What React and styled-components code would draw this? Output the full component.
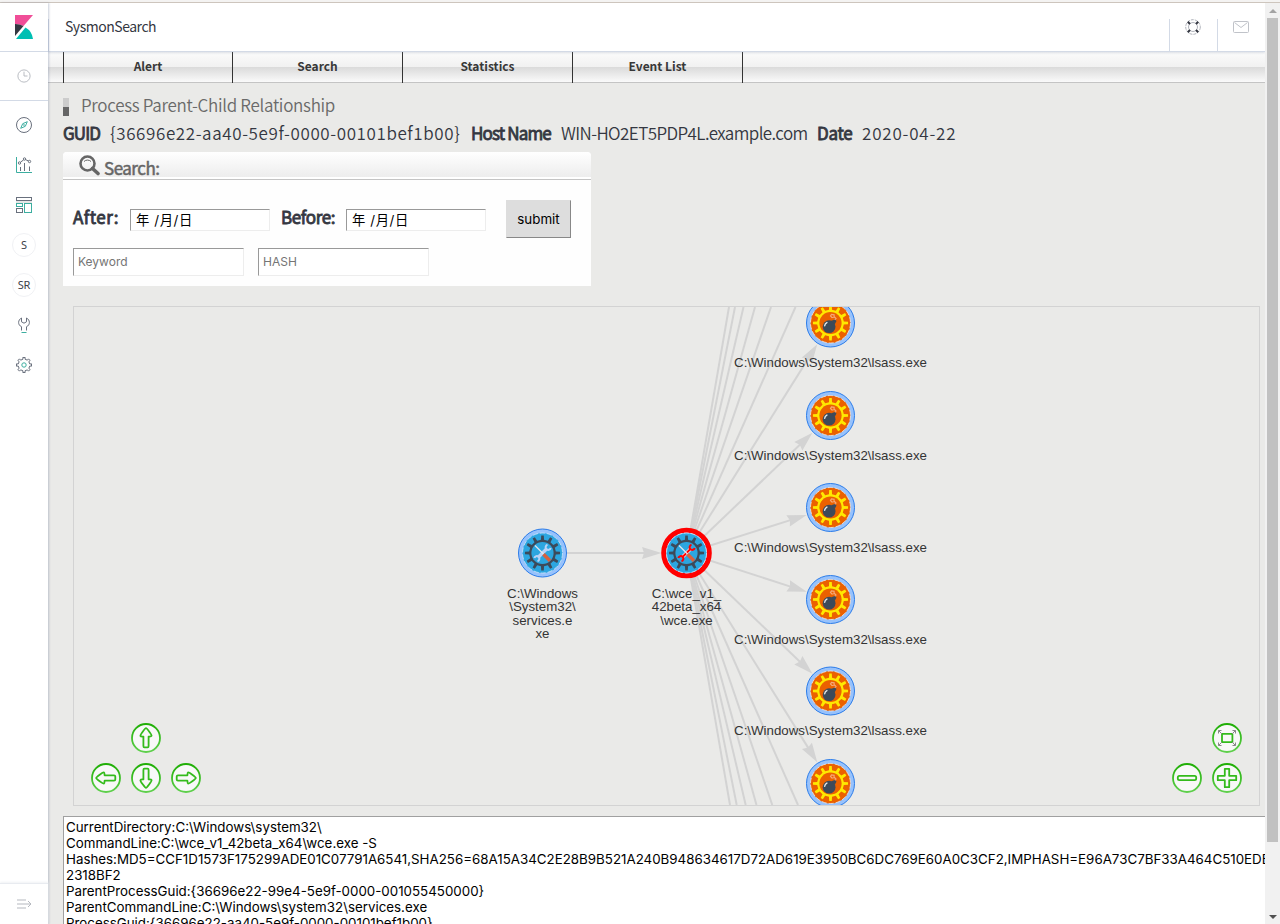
import React from "react";
import styled, { createGlobalStyle } from "styled-components";

const Global = createGlobalStyle`
  * { box-sizing: border-box; }
  html, body { margin: 0; height: 924px; overflow: hidden; background: #eaeae8; }
  body { font-family: "Noto Sans CJK JP", "Noto Sans", sans-serif; color: #343741; }
`;

const Page = styled.div`
  width: 1280px; height: 924px; display: flex; flex-direction: column; overflow: hidden;
`;
const TopEdge = styled.div`
  flex: none; height: 3px; background: #f4f3f2; border-bottom: 1px solid #cdc5bd;
`;
const Body = styled.div`
  flex: 1; min-height: 0; display: flex;
`;
const Sidebar = styled.aside`
  width: 48px; flex: none; background: #fff; display: flex; flex-direction: column;
  box-shadow: 1px 0 2px rgba(100, 115, 150, .35); z-index: 2;
`;
const LogoCell = styled.div`
  height: 49px; flex: none; border-bottom: 1px solid #d3dae6; padding: 12px 0 0 15px;
  svg { display: block; }
`;
const RecentCell = styled.div`
  height: 49px; flex: none; border-bottom: 1px solid #d3dae6; display: flex;
  align-items: center; justify-content: center; padding: 0 1px 1px 0;
`;
const SideList = styled.nav`
  flex: 1; padding-top: 4px; display: flex; flex-direction: column;
`;
const SideItem = styled.div`
  height: 40px; display: flex; align-items: center; justify-content: center;
`;
const Letter = styled.span`
  width: 24px; height: 24px; border: 1px solid #f0f1f4; border-radius: 50%;
  font: 11px/22px "Noto Sans", sans-serif; text-align: center; color: #3c3f4a;
  display: flex; justify-content: center; letter-spacing: -.2px;
`;
const Collapse = styled.div`
  height: 41px; flex: none; border-top: 1px solid #e8ebf0; display: flex;
  align-items: center; justify-content: center; box-shadow: 0 -1px 2px #f0f2f5;
`;
const Main = styled.main`
  flex: 1; min-width: 0; display: flex; flex-direction: column; background: #eaeae8; overflow: hidden;
`;
const Header = styled.header`
  height: 49px; flex: none; background: #fff; border-bottom: 1px solid #d3dae6;
  display: flex; align-items: flex-end; z-index: 1; box-shadow: 0 1px 2px rgba(120, 130, 160, .22);
`;
const AppName = styled.div`
  flex: 1; height: 32px; border-left: 1px solid #d3dae6; padding-left: 16px;
  font-size: 14px; line-height: 15px; letter-spacing: -.48px; white-space: nowrap;
`;
const HeaderCell = styled.div`
  width: 48px; height: 32px; border-left: 1px solid #d3dae6; display: flex; justify-content: center;
  padding-right: 2px;
`;
const Menu = styled.nav`
  height: 31px; flex: none; display: flex; padding-left: 15px; border-bottom: 1px solid #c4c4c4;
  background: linear-gradient(#fbfbfb 0, #f1f1f1 50%, #dadada 50%, #fafafa 100%);
`;
const MenuItem = styled.div`
  width: ${(p) => p.$w}px; height: 31px; border-left: 1px solid #333;
  border-right: ${(p) => (p.$last ? "1px solid #333" : "0")};
  text-align: center; font-size: 12px; font-weight: 700; line-height: 28px; color: #383838;
`;
const Content = styled.div`
  flex: 1; min-height: 0; padding-left: 15px; display: flex; flex-direction: column; overflow: hidden;
`;
const Title = styled.h1`
  margin: 11px 0 2px; height: 22px; flex: none; display: flex; align-items: center; gap: 12px;
  font-size: 17px; font-weight: 350; line-height: 22px; color: #6a6a6a;
  letter-spacing: -.3px;
`;
const Marker = styled.span`
  width: 6px; height: 18px; margin-top: 4px; background: linear-gradient(#ccc 50%, #666 50%);
`;
const Facts = styled.div`
  margin-top: 4px; height: 23px; flex: none; display: flex; font-size: 17px; line-height: 22px; white-space: nowrap;
`;
const Fact = styled.span`
  width: ${(p) => p.$w}px; flex: none; font-weight: ${(p) => (p.$bold ? 400 : 350)};
  -webkit-text-stroke: ${(p) => (p.$bold ? ".8px" : "0")};
  letter-spacing: ${(p) => p.$ls}px;
`;
const SearchPanel = styled.section`
  margin-top: 7px; width: 528px; height: 134px; flex: none; background: #fefefe;
  border-radius: 4px 4px 0 0;
`;
const SearchHead = styled.div`
  height: 28px; border-bottom: 1px solid #c4c4c4; border-radius: 4px 4px 0 0;
  background: linear-gradient(#fff, #ededed 92%, #fff 93%); padding-left: 16px;
  display: flex; gap: 4px; font-size: 17px; line-height: 31px; color: #666;
  letter-spacing: -.5px; -webkit-text-stroke: .5px;
  svg { margin-top: 3px; }
`;
const FormRow = styled.div`
  display: flex; align-items: ${(p) => (p.$text ? "flex-start" : "center")};
  padding: ${(p) => (p.$text ? "10px 0 0 10px" : "20px 0 0 10px")};
`;
const Label = styled.label`
  width: ${(p) => p.$w}px; font-size: 17px; line-height: 22px; margin-top: -5px;
  letter-spacing: ${(p) => p.$ls}px; -webkit-text-stroke: .8px;
`;
const field = `
  background: #fff; border: 1px solid #ededed; border-top-color: #999; border-left-color: #999;
`;
const DateField = styled.div`
  ${field}
  width: 140px; height: 22px; margin-right: ${(p) => p.$mr}px; margin-top: 1px; padding-left: 5px;
  font: 13.33px/20px "Inter", "Noto Sans CJK JP", sans-serif; color: #000; white-space: pre;
  letter-spacing: .6px;
`;
const Submit = styled.button`
  width: 65px; height: 38px; padding: 0; background: #ddd; border: 1px solid #ddd;
  border-right-color: #888; border-bottom-color: #888; color: #000;
  font: 13.33px "Inter", sans-serif;
`;
const TextField = styled.div`
  ${field}
  width: 171px; height: 28px; margin-right: 14px; padding-left: 4px;
  font: 12px/26px "Inter", sans-serif; color: #757575;
`;
const Graph = styled.section`
  margin: 20px 0 0 10px; width: 1187px; height: 500px; flex: none; border: 1px solid #d3d3d3;
  svg { display: block; }
`;
const Details = styled.pre`
  margin: 10px 0 0; width: 1240px; height: 140px; flex: none; background: #fff;
  border: 1px solid #a0a0a0; padding: 2px; color: #000; overflow: hidden;
  font: 13.33px/16px "Inter", sans-serif;
`;
const Scrollbar = styled.div`
  width: 15px; flex: none; background: #f1f1f1; display: flex; flex-direction: column; align-items: center;
  padding: 6px 0 5px;
`;
const Thumb = styled.div`
  width: 11px; height: 824px; margin: 5px 0 auto; background: #c1c1c1;
`;
const Arrow = styled.i`
  width: 0; height: 0; border: 4px solid transparent;
  ${(p) => p.$up ? "border-top: 0; border-bottom-color: #a3a3a3;" : "border-bottom: 0; border-top-color: #505050;"}
`;

const Icon = ({ s = 16, children, c = "#69707d" }) => (
  <svg width={s} height={s} viewBox="0 0 16 16" fill="none" stroke={c} strokeWidth="1">{children}</svg>
);

const gearPath = (outer, inner, teeth, top, base) => {
  const step = (Math.PI * 2) / teeth;
  let d = "";
  for (let i = 0; i < teeth; i++) {
    const a = i * step - Math.PI / 2;
    [[inner, -base], [outer, -top], [outer, top], [inner, base]].forEach(([r, k]) => {
      const t = a + k * step;
      d += `${d ? "L" : "M"}${(r * Math.cos(t)).toFixed(2)} ${(r * Math.sin(t)).toFixed(2)}`;
    });
  }
  return d + "Z";
};

const GEAR = gearPath(17.6, 13.4, 12, 0.14, 0.22);

const Bomb = ({ x, y }) => (
  <g transform={`translate(${x} ${y})`}>
    <circle r="24" fill="#97c2fc" stroke="#2b7ce9" />
    <circle r="20" fill="#eb6100" stroke="#f3e9df" strokeWidth=".8" strokeDasharray="5 2" />
    <path d={GEAR} fill="#ffe800" />
    <circle r="11.1" fill="#eb6100" />
    <path d="M3.800-2.500 5.500-4.500 4-6 1.500-5.500 0-7 1-8.600 3.600-8.200 3.600-6" fill="none" stroke="#f5a878" strokeWidth="1.200" />
    <circle cx="-1.4" cy="3.7" r="6.4" fill="#3d4a5a" />
    <path d="m.8-2.200 3.600-1.200 1.600 1.400-1.800 3.500Z" fill="#3d4a5a" />
    <path d="M-5.800 2.800a4 4 0 0 1 2.200-3.200" stroke="#e8ebee" strokeWidth="1.400" strokeLinecap="round" fill="none" />
  </g>
);

const Tool = ({ x, y, selected }) => {
  const wrench = selected ? "#f00" : "#b9d3f7";
  return (
    <g transform={`translate(${x} ${y})`}>
      <circle r={selected ? 22.8 : 24} fill={selected ? "#d2e5ff" : "#97c2fc"} stroke={selected ? "#f00" : "#2b7ce9"} strokeWidth={selected ? 5 : 1} />
      <circle r="20" fill="#2ca6e0" stroke="#cfe6f8" strokeWidth=".8" strokeDasharray="5 2" />
      <path d={GEAR} fill="#3d4a5a" />
      <circle r="11.1" fill="#2ca6e0" />
      <path d="M-4.500 4.500 4.500-4.500" stroke={selected ? "#f6f0f0" : wrench} strokeWidth="3.400" />
      <path d="M-4.500 4.500 4.500-4.500" stroke={wrench} strokeWidth="2" />
      <path d="M8.200-5A2.600 2.600 0 1 1 5-8.200M-8.200 5A2.600 2.600 0 1 1-5 8.200" fill="none" stroke={wrench} strokeWidth="2" />
      <path d="M-7.500-7.500 1 1" stroke="#e3e8ee" strokeWidth="1.300" />
      <path d="m1 1.200 6.500 6.500" stroke="#d8613f" strokeWidth="3.600" />
    </g>
  );
};

const CX = 612.5, CY = 246;
const lsassY = [16, 108.5, 200.5, 292.5, 384, 476.5];
const fan = [[655, 0], [661, 0], [669.5, 0], [681, 0], [697, 0], [721.5, 0],
  [656, 498], [662.7, 498], [671.7, 498], [682.5, 498], [698.3, 498], [724, 498]];

const Edge = ({ x1, y1, x2, y2 }) => {
  const a = Math.atan2(y2 - y1, x2 - x1);
  const tx = x2 - 25 * Math.cos(a), ty = y2 - 25 * Math.sin(a);
  return (
    <g>
      <path d={`M${x1} ${y1}L${tx - 17 * Math.cos(a)} ${ty - 17 * Math.sin(a)}`} stroke="#d3d3d3" strokeWidth="2" />
      <path d="M0 0-19.5 5.9-17.5 0-19.5-5.9Z" fill="#d3d3d3" transform={`translate(${tx} ${ty}) rotate(${(a * 180) / Math.PI})`} />
    </g>
  );
};

const NodeText = ({ x, y, lines }) => (
  <g fontFamily="Liberation Sans, sans-serif" fontSize="13.3" fill="#343434" textAnchor="middle">
    {lines.map((t, i) => <text key={i} x={x} y={y + i * 13.4}>{t}</text>)}
  </g>
);

const arrowShape = "M0-9.8C1-9.800 5.900-3 5.600-2.200 5.200-1.200 3.400-1.600 2.600-1.400V8Q2.600 9.300 1.600 9.300H-1.600Q-2.600 9.300-2.600 8V-1.400C-3.400-1.600-5.200-1.200-5.600-2.200-5.900-3-1-9.800 0-9.800Z";
const Control = ({ x, y, rot = 0, kind }) => (
  <g transform={`translate(${x} ${y})`} fill="none" stroke="url(#green)" strokeWidth="1.8" strokeLinejoin="round">
    <circle r="14" fill="#f8f8f8" />
    {!kind && <path d={arrowShape} transform={`rotate(${rot})`} stroke="#34bb1c" />}
    {kind === "minus" && <rect x="-9.2" y="-2.2" width="18.4" height="4.4" rx="1.6" stroke="#34bb1c" />}
    {kind === "plus" && <path d="M-2.2-9.2H2.2V-2.2H9.2V2.2H2.2V9.2H-2.2V2.2H-9.2V-2.2H-2.2Z" stroke="#34bb1c" />}
    {kind === "fit" && (
      <>
        <rect x="-5" y="-4.2" width="10.4" height="8.4" stroke="#34bb1c" />
        <path d="m-5-4-3.500-3.500M5-4l3.500-3.500M-5 4l-3.500 3.500M5 4l3.500 3.500M-8.500-4.500v-3h3M8.500-4.500v-3h-3M-8.500 4.500v3h3M8.500 4.500v3h-3" stroke="#888" strokeWidth="1" />
      </>
    )}
  </g>
);

const details = `CurrentDirectory:C:\\Windows\\system32\\
CommandLine:C:\\wce_v1_42beta_x64\\wce.exe -S
Hashes:MD5=CCF1D1573F175299ADE01C07791A6541,SHA256=68A15A34C2E28B9B521A240B948634617D72AD619E3950BC6DC769E60A0C3CF2,IMPHASH=E96A73C7BF33A464C510EDE
2318BF2
ParentProcessGuid:{36696e22-99e4-5e9f-0000-001055450000}
ParentCommandLine:C:\\Windows\\system32\\services.exe
ProcessGuid:{36696e22-aa40-5e9f-0000-00101bef1b00}`;

export default function App() {
  return (
    <Page>
      <Global />
      <TopEdge />
      <Body>
        <Sidebar>
          <LogoCell>
            <svg width="18" height="24" viewBox="0 0 18 24">
              <path d="M0 0H18L8.5 11A20 20 0 0 0 0 9Z" fill="#f04e98" />
              <path d="M0 9A18 18 0 0 1 8.5 11L0 21Z" fill="#343741" />
              <path d="M10.5 12.5A15 15 0 0 1 18 24H1Z" fill="#00bfb3" />
            </svg>
          </LogoCell>
          <RecentCell>
            <Icon s={14} c="#b0b3ba"><circle cx="8" cy="8" r="7" /><path d="M8 3v5h4" /></Icon>
          </RecentCell>
          <SideList>
            <SideItem><Icon><circle cx="8" cy="8" r="7.5" /><path d="m11.3 4.7-2 4.600-4.600 2 2-4.600Z" stroke="#3caea0" /><circle cx="8" cy="8" r=".4" stroke="#3caea0" /></Icon></SideItem>
            <SideItem><Icon><path d="M.5 0v15.500H16" stroke="#3caea0" /><path d="M4.500 10v4M8.500 6v8M13.500 9.500v4.500M4.700 5l2.800-2M9.500 2.600l3 1.400" /><circle cx="3.500" cy="6" r="1.200" /><circle cx="8.500" cy="2" r="1.200" /><circle cx="13.500" cy="4.500" r="1.200" /></Icon></SideItem>
            <SideItem><Icon><rect x=".5" y=".5" width="15" height="3" /><path d="M0 5h16" stroke="#ccc" /><rect x=".5" y="6.500" width="6" height="3" stroke="#3caea0" /><rect x="8.500" y="6.500" width="7" height="9" stroke="#3caea0" /><rect x=".5" y="11.500" width="6" height="4" /></Icon></SideItem>
            <SideItem><Letter>S</Letter></SideItem>
            <SideItem><Letter>SR</Letter></SideItem>
            <SideItem><Icon><path d="M5.500 13.500V9.700C1.500 8 1.800 2.800 5.500 1v3.800L8 6.200l2.500-1.400V1c3.700 1.800 4 7 0 8.700v3.800" /><path d="M5.500 15.500h5" stroke="#3caea0" /></Icon></SideItem>
            <SideItem><Icon><path d={gearPath(7.6, 5.9, 8, 0.2, 0.22)} transform="translate(8 8)" /><circle cx="8" cy="8" r="2.2" stroke="#3caea0" /></Icon></SideItem>
          </SideList>
          <Collapse><Icon c="#b5b8bf"><path d="M1 4h9M1 8h14M1 12h9M12 5l3 3-3 3" /></Icon></Collapse>
        </Sidebar>
        <Main>
          <Header>
            <AppName>SysmonSearch</AppName>
            <HeaderCell><Icon c="#b0b3bb"><circle cx="8" cy="8" r="7.300" strokeDasharray="3 1" /><circle cx="8" cy="8" r="4.500" /><path d="m2.800 2.800 2.200 2.200M13.200 2.800 11 5M2.800 13.200 5 11M13.200 13.200 11 11" stroke="#343741" strokeWidth="2" /></Icon></HeaderCell>
            <HeaderCell><Icon c="#c0c3c9"><rect x=".5" y="2.500" width="15" height="11" rx="1" /><path d="m1.500 3.500 6.500 5 6.500-5" /></Icon></HeaderCell>
          </Header>
          <Menu>
            <MenuItem $w={169}>Alert</MenuItem>
            <MenuItem $w={170}>Search</MenuItem>
            <MenuItem $w={170}>Statistics</MenuItem>
            <MenuItem $w={171} $last>Event List</MenuItem>
          </Menu>
          <Content>
            <Title><Marker />Process Parent-Child Relationship</Title>
            <Facts>
              <Fact $bold $w={47} $ls={-0.9}>GUID</Fact><Fact $w={361} $ls={0.6}>{"{36696e22-aa40-5e9f-0000-00101bef1b00}"}</Fact>
              <Fact $bold $w={90} $ls={-0.85}>Host Name</Fact><Fact $w={256} $ls={-0.58}>WIN-HO2ET5PDP4L.example.com</Fact>
              <Fact $bold $w={45} $ls={-0.3}>Date</Fact><Fact $w={110} $ls={0.8}>2020-04-22</Fact>
            </Facts>
            <SearchPanel>
              <SearchHead>
                <svg width="21" height="21" viewBox="0 0 21 21" fill="none" stroke="#666"><circle cx="8.500" cy="8.500" r="7" strokeWidth="2.600" /><path d="m13.500 13.500 5.500 5" strokeWidth="3.600" strokeLinecap="round" /><path d="M5 6.500a5 5 0 0 1 7 0" /></svg>
                Search:
              </SearchHead>
              <FormRow>
                <Label $w={57} $ls={0.5}>After:</Label><DateField $mr={11}>年 /月/日</DateField>
                <Label $w={65} $ls={-0.4}>Before:</Label><DateField $mr={20}>年 /月/日</DateField>
                <Submit>submit</Submit>
              </FormRow>
              <FormRow $text><TextField>Keyword</TextField><TextField>HASH</TextField></FormRow>
            </SearchPanel>
            <Graph>
              <svg width="1185" height="498" viewBox="0 0 1185 498">
                <defs><linearGradient id="green" x1="0" y1="0" x2="0" y2="1"><stop stopColor="#1fae05" /><stop offset="1" stopColor="#5fd04c" /></linearGradient></defs>
                {fan.map(([x, y], i) => <path key={i} d={`M${CX} ${CY}L${x} ${y}`} stroke="#d3d3d3" strokeWidth="2" />)}
                {lsassY.map((y) => <Edge key={y} x1={CX} y1={CY} x2={756.5} y2={y} />)}
                <Edge x1={468.5} y1={CY} x2={CX} y2={CY} />
                {lsassY.map((y) => <Bomb key={y} x={756.5} y={y} />)}
                <Tool x={468.5} y={CY} />
                <Tool x={CX} y={CY} selected />
                {lsassY.slice(0, 5).map((y) => <NodeText key={y} x={756.5} y={y + 44} lines={["C:\\Windows\\System32\\lsass.exe"]} />)}
                <NodeText x={468.5} y={291} lines={["C:\\Windows", "\\System32\\", "services.e", "xe"]} />
                <NodeText x={CX} y={291} lines={["C:\\wce_v1_", "42beta_x64", "\\wce.exe"]} />
                <Control x={72} y={431} /><Control x={72} y={471} rot={180} />
                <Control x={32} y={471} rot={-90} /><Control x={112} y={471} rot={90} />
                <Control x={1153} y={431} kind="fit" /><Control x={1113} y={471} kind="minus" /><Control x={1153} y={471} kind="plus" />
              </svg>
            </Graph>
            <Details>{details}</Details>
          </Content>
        </Main>
        <Scrollbar><Arrow $up /><Thumb /><Arrow /></Scrollbar>
      </Body>
    </Page>
  );
}
